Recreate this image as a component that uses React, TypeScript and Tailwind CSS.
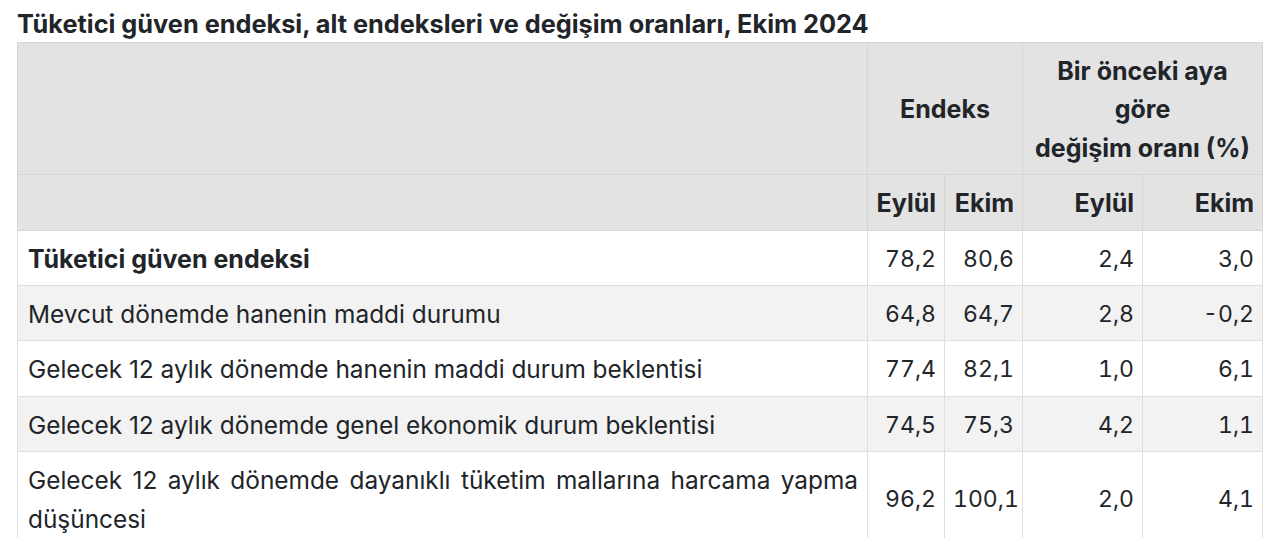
import React from "react";

const rows = [
  { label: "Tüketici güven endeksi", bold: true, v: ["78,2", "80,6", "2,4", "3,0"] },
  { label: "Mevcut dönemde hanenin maddi durumu", v: ["64,8", "64,7", "2,8", "-0,2"] },
  { label: "Gelecek 12 aylık dönemde hanenin maddi durum beklentisi", v: ["77,4", "82,1", "1,0", "6,1"] },
  { label: "Gelecek 12 aylık dönemde genel ekonomik durum beklentisi", v: ["74,5", "75,3", "4,2", "1,1"] },
  { label: "Gelecek 12 aylık dönemde dayanıklı tüketim mallarına harcama yapma düşüncesi", v: ["96,2", "100,1", "2,0", "4,1"] },
];

export default function App() {
  return (
    <div className="bg-white text-[#212529]" style={{ fontFamily: "Inter, 'Noto Sans', sans-serif" }}>
      <div className="pl-[17px] pr-[2px] pt-[8px]">
        <h1 className="text-[25.3px] leading-[32px] font-bold mb-[2px]">
          Tüketici güven endeksi, alt endeksleri ve değişim oranları, Ekim 2024
        </h1>
        <table className="w-[1245px] table-fixed border-collapse text-[24.4px] leading-[38.4px]">
          <colgroup>
            <col className="w-[850px]" />
            <col className="w-[77px]" />
            <col className="w-[78px]" />
            <col className="w-[120px]" />
            <col className="w-[120px]" />
          </colgroup>
          <thead className="bg-[#e3e3e3] font-bold text-[25px]">
            <tr>
              <th className="border border-[#d6d6d6] pt-[9px] pb-[7px] px-[10px]"></th>
              <th colSpan={2} className="border border-[#d6d6d6] pt-[9px] pb-[7px] px-[6px] text-center align-middle">
                Endeks
              </th>
              <th colSpan={2} className="border border-[#d6d6d6] pt-[9px] pb-[7px] px-[6px] text-center align-middle">
                Bir önceki aya
                <br />
                göre
                <br />
                değişim oranı (%)
              </th>
            </tr>
            <tr>
              <th className="border border-[#d6d6d6] pt-[9px] pb-[7px] px-[10px]"></th>
              <th className="border border-[#d6d6d6] pt-[9px] pb-[7px] px-[8px] text-right">Eylül</th>
              <th className="border border-[#d6d6d6] pt-[9px] pb-[7px] px-[8px] text-right">Ekim</th>
              <th className="border border-[#d6d6d6] pt-[9px] pb-[7px] px-[8px] text-right">Eylül</th>
              <th className="border border-[#d6d6d6] pt-[9px] pb-[7px] px-[8px] text-right">Ekim</th>
            </tr>
          </thead>
          <tbody>
            {rows.map((r, i) => (
              <tr key={i} className={i % 2 === 1 ? "bg-[#f2f2f2]" : "bg-white"}>
                <td
                  className={
                    "border border-[#dedede] pt-[9px] pb-[7px] pl-[10px] pr-[9px] text-justify " +
                    (r.bold ? "font-bold text-[25px]" : "font-normal")
                  }
                >
                  {r.label}
                </td>
                {r.v.map((x, j) => (
                  <td
                    key={j}
                    className="border border-[#dedede] pt-[9px] pb-[7px] px-[8px] text-right text-[23px] tabular-nums"
                  >
                    {x}
                  </td>
                ))}
              </tr>
            ))}
          </tbody>
        </table>
      </div>
    </div>
  );
}
